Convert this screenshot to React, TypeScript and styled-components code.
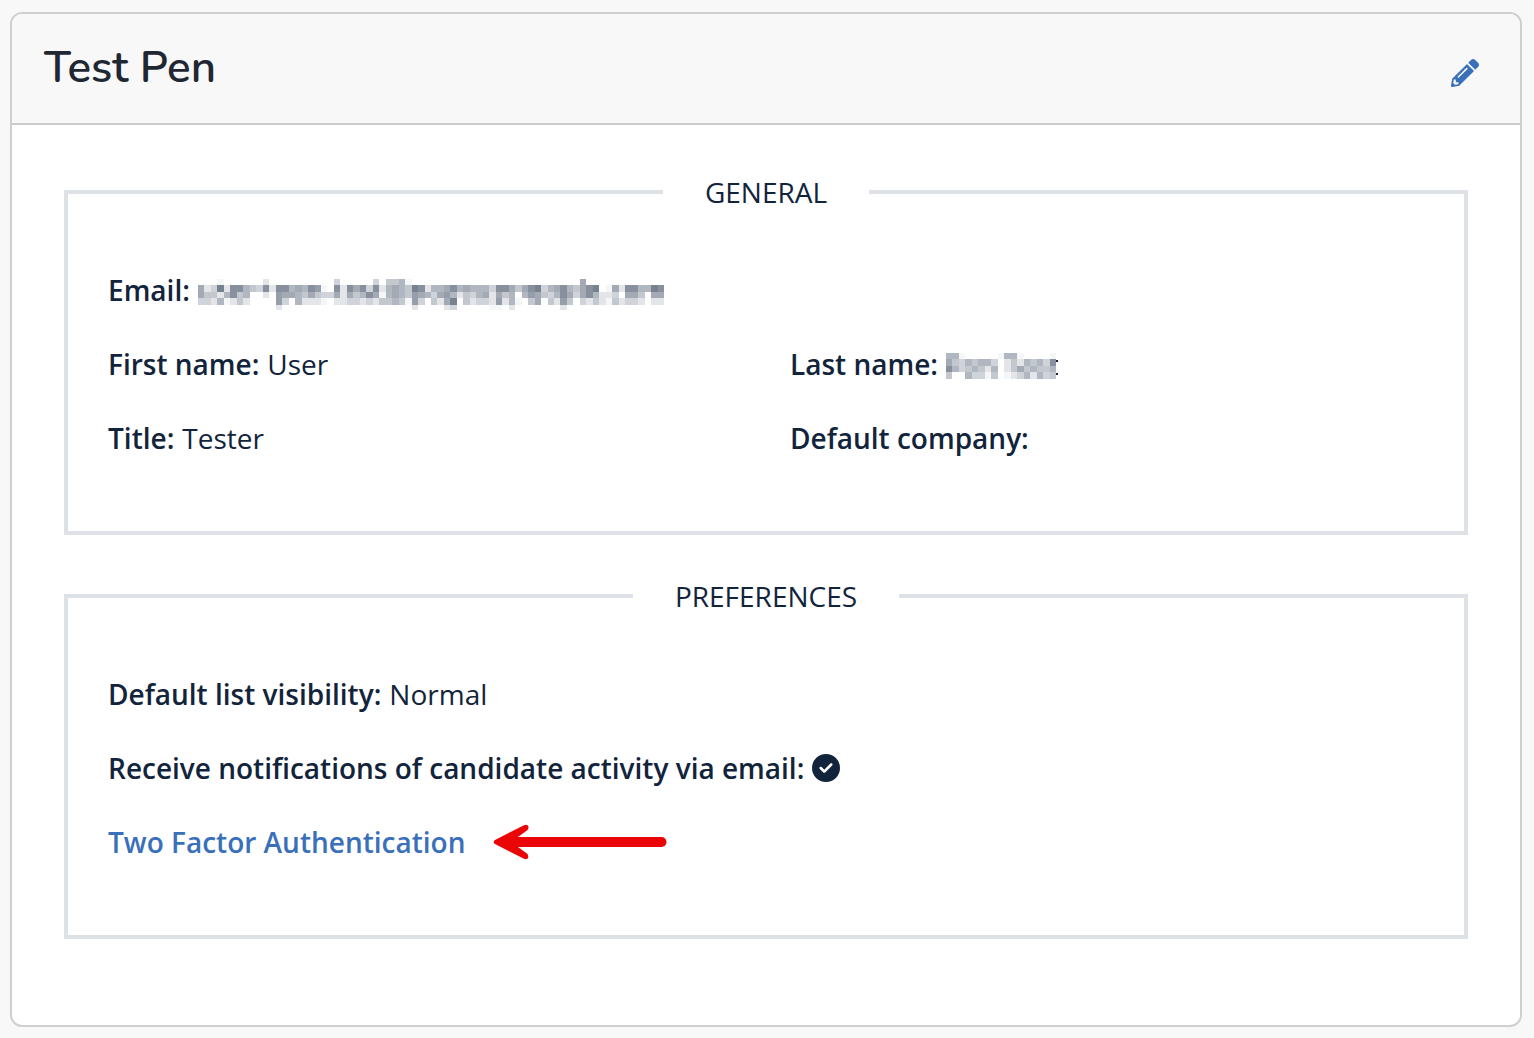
import React from 'react';
import styled, { createGlobalStyle } from 'styled-components';
import { FaPencilAlt } from 'react-icons/fa';
import { FaCircleCheck } from 'react-icons/fa6';

const GlobalStyle = createGlobalStyle`
  *, *::before, *::after { box-sizing: border-box; }
  body {
    margin: 0;
    background: #f8f8f8;
    color: #12243c;
    font-family: "Open Sans", "Noto Sans", sans-serif;
    font-size: 28px;
    line-height: 42px;
  }
`;

const Page = styled.main`
  padding: 12px 12px 11px 10px;
`;

const Card = styled.section`
  overflow: hidden;
  border: 2px solid #cfcfcf;
  border-radius: 12px;
  background: #fff;
`;

const CardHeader = styled.header`
  display: flex;
  align-items: center;
  justify-content: space-between;
  padding: 24px 41px 24px 32px;
  border-bottom: 2px solid #cacaca;
  background: #f8f8f8;
`;

const Title = styled.h1`
  margin: 0;
  color: #1f2733;
  font-family: Nunito, Lato, sans-serif;
  font-size: 44px;
  font-weight: 600;
  line-height: 61px;
`;

const IconButton = styled.button`
  display: flex;
  margin-top: 8px;
  padding: 0;
  border: 0;
  background: none;
  color: #3970b9;
  font-size: 28px;
  cursor: pointer;
`;

const CardBody = styled.div`
  display: flex;
  flex-direction: column;
  gap: 42px;
  padding: 48px 52px 86px;
`;

const Group = styled.fieldset`
  min-width: 0;
  margin: 0;
  padding: 58px 40px 40px;
  border: 4px solid #dee2e6;
`;

const Legend = styled.legend`
  margin: 0 auto;
  padding: 0 42px;
  line-height: 38px;
  text-transform: uppercase;
`;

const Fields = styled.div`
  display: grid;
  grid-template-columns: 1fr 1fr;
  column-gap: 48px;
`;

const Field = styled.div<{ $wide?: boolean }>`
  display: flex;
  align-items: center;
  gap: 8px;
  grid-column: ${({ $wide }) => ($wide ? '1 / -1' : 'auto')};
  margin-bottom: 32px;
`;

const Label = styled.span`
  font-weight: 600;
`;

const SettingsLink = styled.a`
  margin-right: 20px;
  color: #3970b9;
  font-weight: 600;
  text-decoration: none;
`;

const Mosaic = styled.svg`
  display: block;
  align-self: flex-start;
  margin-top: 10px;
`;

const shades = ['#ffffff', '#f5f6f7', '#e3e5e9', '#d0d3d9', '#c3c7ce', '#b1b7c0', '#a3aab4', '#969eaa', '#88909d', '#78828f'];

const emailCells = [
  '000100000020000000000300000304451000' + '000000000000000000000006000000000000',
  '623928854382885658710828683825654982' + '556856555388646893568546890162885598',
  '644258450020766546433626458615654765' + '367524356264505764358636852230664066',
  '332512420000730522210223323244541730' + '426904233272510460427403242142332022',
  '000000000000200000000000000000000200' + '002300000110200000002000000000000000',
];

const lastNameCells = [
  '55100000155100001',
  '64354553024254538',
  '85345425024645445',
  '40053314012352534',
];

function Redacted({ rows, width, height, label, children }: {
  rows: string[];
  width: number;
  height: number;
  label: string;
  children?: React.ReactNode;
}) {
  const columns = rows[0].length;
  const edge = (n: number) => Math.round((n * width) / columns);
  const line = (n: number) => Math.min(height, Math.floor(n * 6.5));
  return (
    <Mosaic width={width + 3} height={height} role="img" aria-label={label} shapeRendering="crispEdges">
      {rows.map((row, y) =>
        row.split('').map((cell, x) => (
          <rect
            key={`${x}-${y}`}
            x={edge(x)}
            y={line(y)}
            width={edge(x + 1) - edge(x)}
            height={line(y + 1) - line(y)}
            fill={shades[Number(cell)]}
          />
        )),
      )}
      {children}
    </Mosaic>
  );
}

function Arrow() {
  return (
    <svg width="174" height="36" viewBox="0 0 174 36" fill="none" aria-hidden="true">
      <path d="M22 18H168.500" stroke="#ea0606" strokeWidth="10" strokeLinecap="round" />
      <path d="M1.500 16.200 31 1.200Q34.500 0 35.500 2.500 35.800 5 34 6.500L23.500 14V22L34 29.500Q36 31.500 35 34 33.500 36 31 34.800L1.500 19.800Q0 18 1.500 16.200Z" fill="#ea0606" />
    </svg>
  );
}

export default function App() {
  return (
    <>
      <GlobalStyle />
      <Page>
        <Card>
          <CardHeader>
            <Title>Test Pen</Title>
            <IconButton type="button" aria-label="Edit">
              <FaPencilAlt />
            </IconButton>
          </CardHeader>
          <CardBody>
            <Group>
              <Legend>General</Legend>
              <Fields>
                <Field $wide>
                  <Label>Email:</Label>
                  <Redacted rows={emailCells} width={466} height={31} label="Email hidden" />
                </Field>
                <Field>
                  <Label>First name:</Label>
                  <span>User</span>
                </Field>
                <Field>
                  <Label>Last name:</Label>
                  <Redacted rows={lastNameCells} width={110} height={26} label="Last name hidden">
                    <rect x="110" y="7" width="2" height="2" fill="#12243c" />
                    <rect x="110" y="20" width="2" height="2" fill="#12243c" />
                  </Redacted>
                </Field>
                <Field>
                  <Label>Title:</Label>
                  <span>Tester</span>
                </Field>
                <Field>
                  <Label>Default company:</Label>
                </Field>
              </Fields>
            </Group>
            <Group>
              <Legend>Preferences</Legend>
              <Fields>
                <Field $wide>
                  <Label>Default list visibility:</Label>
                  <span>Normal</span>
                </Field>
                <Field $wide>
                  <Label>Receive notifications of candidate activity via email:</Label>
                  <FaCircleCheck role="img" aria-label="Yes" />
                </Field>
                <Field $wide>
                  <SettingsLink href="#two-factor">Two Factor Authentication</SettingsLink>
                  <Arrow />
                </Field>
              </Fields>
            </Group>
          </CardBody>
        </Card>
      </Page>
    </>
  );
}
